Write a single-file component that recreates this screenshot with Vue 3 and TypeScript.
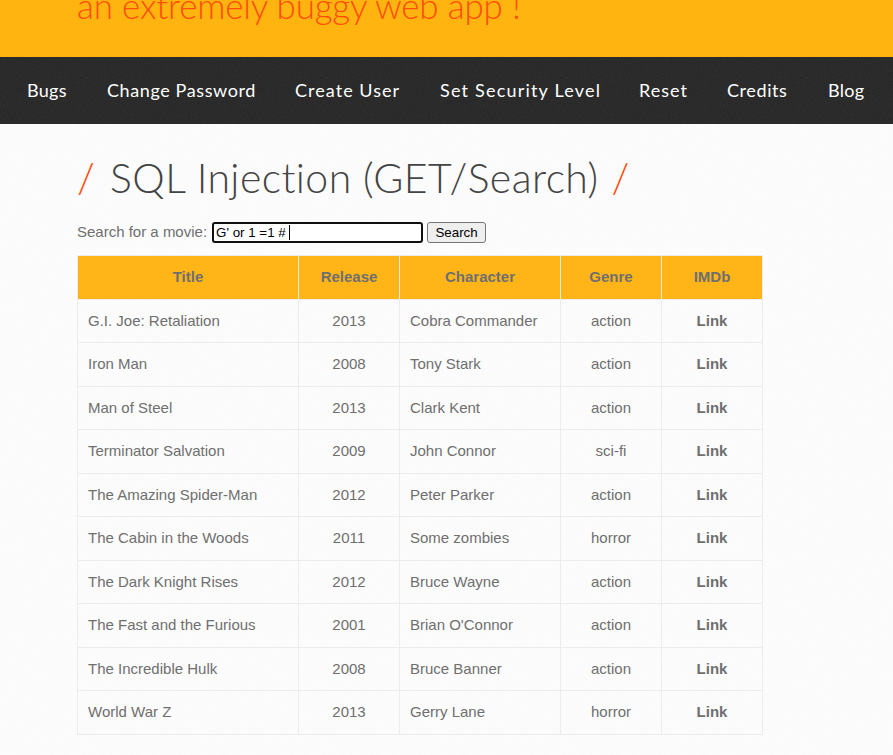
<script setup lang="ts">
import { ref } from 'vue'

interface Movie { title: string; release: string; character: string; genre: string }

const navItems: string[] = ['Bugs', 'Change Password', 'Create User', 'Set Security Level', 'Reset', 'Credits', 'Blog']
const movies: Movie[] = [
  { title: 'G.I. Joe: Retaliation', release: '2013', character: 'Cobra Commander', genre: 'action' },
  { title: 'Iron Man', release: '2008', character: 'Tony Stark', genre: 'action' },
  { title: 'Man of Steel', release: '2013', character: 'Clark Kent', genre: 'action' },
  { title: 'Terminator Salvation', release: '2009', character: 'John Connor', genre: 'sci-fi' },
  { title: 'The Amazing Spider-Man', release: '2012', character: 'Peter Parker', genre: 'action' },
  { title: 'The Cabin in the Woods', release: '2011', character: 'Some zombies', genre: 'horror' },
  { title: 'The Dark Knight Rises', release: '2012', character: 'Bruce Wayne', genre: 'action' },
  { title: 'The Fast and the Furious', release: '2001', character: "Brian O'Connor", genre: 'action' },
  { title: 'The Incredible Hulk', release: '2008', character: 'Bruce Banner', genre: 'action' },
  { title: 'World War Z', release: '2013', character: 'Gerry Lane', genre: 'horror' },
]
const search = ref("G' or 1 =1 # ")
</script>

<template>
  <div class="page">
    <header class="banner">
      <h2 class="tagline">an extremely buggy web app !</h2>
    </header>
    <nav class="menu">
      <a v-for="item in navItems" :key="item" class="menu-link" href="#">{{ item }}</a>
    </nav>
    <main class="content">
      <h1 class="heading"><span class="slash">/</span><span class="heading-text">SQL Injection (GET/Search)</span><span class="slash">/</span></h1>
      <form class="search" @submit.prevent>
        <label class="search-label" for="title">Search for a movie:</label>
        <span class="input-wrap">
          <input id="title" v-model="search" class="search-input" type="text" />
          <span class="caret"></span>
        </span>
        <button class="search-button" type="submit">Search</button>
      </form>
      <table class="movies">
        <colgroup>
          <col class="c1" /><col class="c2" /><col class="c3" /><col class="c4" /><col class="c5" />
        </colgroup>
        <thead>
          <tr>
            <th>Title</th><th>Release</th><th>Character</th><th>Genre</th><th>IMDb</th>
          </tr>
        </thead>
        <tbody>
          <tr v-for="movie in movies" :key="movie.title">
            <td>{{ movie.title }}</td>
            <td class="mid">{{ movie.release }}</td>
            <td>{{ movie.character }}</td>
            <td class="mid">{{ movie.genre }}</td>
            <td class="mid"><a class="imdb" href="#">Link</a></td>
          </tr>
        </tbody>
      </table>
    </main>
  </div>
</template>

<style>
html, body { margin: 0; background: #fcfcfc; overflow: hidden; }
</style>

<style scoped>
.page {
  height: 755px;
  overflow: hidden;
  background-color: #fefefe;
  background-image: url("data:image/svg+xml,%3Csvg xmlns='http://www.w3.org/2000/svg' width='240' height='240'%3E%3Cfilter id='n'%3E%3CfeTurbulence type='fractalNoise' baseFrequency='.7' numOctaves='2'/%3E%3CfeColorMatrix values='0 0 0 0 0 0 0 0 0 0 0 0 0 0 0 0 0 0 .02 0'/%3E%3C/filter%3E%3Crect width='240' height='240' filter='url(%23n)'/%3E%3C/svg%3E");
  font-family: "Liberation Sans", Arial, sans-serif;
  color: #6f6f6f;
}
.banner {
  height: 57px;
  background: #ffb40f;
  box-sizing: border-box;
  padding-left: 77px;
  overflow: hidden;
}
.tagline {
  margin: -15px 0 0;
  font-family: "Lato", sans-serif;
  font-weight: 300;
  font-size: 35px;
  line-height: 40px;
  letter-spacing: -0.2px;
  white-space: nowrap;
  color: #ff4d0a;
}
.menu {
  height: 67px;
  background-color: #232323;
  background-image: url("data:image/svg+xml,%3Csvg xmlns='http://www.w3.org/2000/svg' width='240' height='240'%3E%3Cfilter id='n'%3E%3CfeTurbulence type='fractalNoise' baseFrequency='.8' numOctaves='2'/%3E%3CfeColorMatrix values='0 0 0 0 1 0 0 0 0 1 0 0 0 0 1 0 0 0 .07 0'/%3E%3C/filter%3E%3Crect width='240' height='240' filter='url(%23n)'/%3E%3C/svg%3E");
  box-sizing: border-box;
  padding: 0 0 2px 27px;
  display: grid;
  grid-template-columns: 40px 148px 105px 159px 48px 61px 36px;
  column-gap: 40px;
  align-items: center;
}
.menu-link {
  font-family: "Lato", sans-serif;
  font-size: 18px;
  color: #fff;
  text-decoration: none;
  white-space: nowrap;
  letter-spacing: 0.6px;
}
.menu-link:nth-child(3) { letter-spacing: 1.05px; }
.menu-link:nth-child(4) { letter-spacing: 1.2px; }
.menu-link:nth-child(5) { letter-spacing: 1px; }
.menu-link:nth-child(1), .menu-link:nth-child(7) { letter-spacing: 0.3px; }
.content {
  padding: 0 77px;
}
.heading {
  margin: 30px 0 0;
  height: 48px;
  display: flex;
  align-items: center;
  font-family: "Lato", sans-serif;
  font-weight: 300;
  font-size: 41px;
  line-height: 48px;
  color: #444;
  white-space: nowrap;
}
.slash { color: #ff4d0a; width: 17px; }
.heading-text { margin: 0 13px 0 16px; letter-spacing: 0.4px; }
.search {
  margin-top: 19px;
  height: 23px;
  display: flex;
  align-items: center;
  font-size: 15px;
}
.search-label { margin: 0 5px 2px 0; }
.input-wrap {
  position: relative;
  display: block;
  height: 21px;
}
.search-input {
  display: block;
  width: 211px;
  height: 21px;
  box-sizing: border-box;
  padding: 1px 2px;
  border: 2px solid #101010;
  border-radius: 3px;
  outline: none;
  background: #fff;
  color: #000;
  font: 13.33px "Liberation Sans", Arial, sans-serif;
}
.caret {
  position: absolute;
  left: 77px;
  top: 3px;
  width: 1px;
  height: 15px;
  background: #000;
}
.search-button {
  margin-left: 4px;
  width: 59px;
  height: 21px;
  box-sizing: border-box;
  padding: 0;
  border: 1px solid #767676;
  border-radius: 3px;
  background: #efefef;
  color: #000;
  font: 13.33px "Liberation Sans", Arial, sans-serif;
}
.movies {
  margin-top: 11px;
  width: 685px;
  table-layout: fixed;
  border-collapse: collapse;
  font-size: 15px;
}
.c1 { width: 221px; }
.c2 { width: 101px; }
.c3 { width: 161px; }
.c4 { width: 101px; }
.c5 { width: 101px; }
th {
  height: 43.5px;
  box-sizing: border-box;
  padding: 0 10px 1px;
  background: #ffb518;
  border: 1px solid #ececec;
  color: #6f6f6f;
  font-weight: 700;
  text-align: center;
}
td {
  height: 43.5px;
  box-sizing: border-box;
  padding: 0 10px 1px;
  border: 1px solid #ececec;
}
.mid { text-align: center; }
.imdb { color: #6f6f6f; font-weight: 700; text-decoration: none; }
</style>
